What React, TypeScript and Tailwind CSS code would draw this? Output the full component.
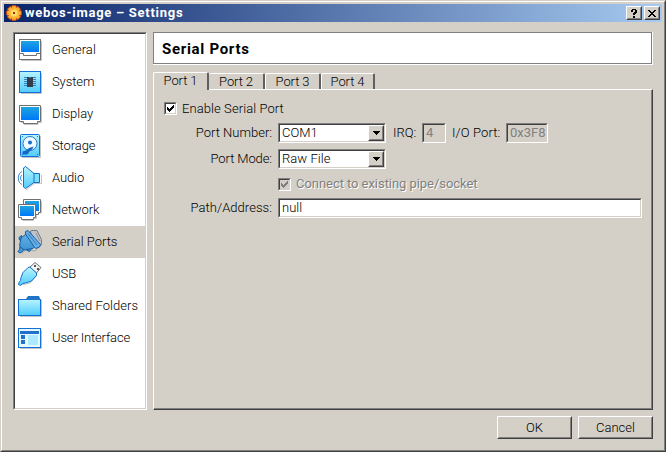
import type { ReactNode } from "react";

const sunken =
  "border border-t-[#808080] border-l-[#808080] border-r-white border-b-white";
const sunkenInner =
  "border border-t-[#404040] border-l-[#404040] border-r-[#d4d0c8] border-b-[#d4d0c8]";
const raised =
  "border border-t-white border-l-white border-r-[#404040] border-b-[#404040]";
const raisedInner =
  "border border-t-[#d4d0c8] border-l-[#d4d0c8] border-r-[#808080] border-b-[#808080]";

function Sunken({ className, inner, children }: { className: string; inner: string; children?: ReactNode }) {
  return (
    <div className={`${sunken} flex shrink-0 ${className}`}>
      <div className={`${sunkenInner} flex min-w-0 flex-1 ${inner}`}>{children}</div>
    </div>
  );
}

function Raised({ className, children }: { className: string; children: ReactNode }) {
  return (
    <button className={`${raised} flex shrink-0 bg-[#d4d0c8] ${className}`}>
      <span className={`${raisedInner} flex h-full flex-1 items-center justify-center`}>{children}</span>
    </button>
  );
}

function Combo({ value, tracking }: { value: string; tracking: string }) {
  return (
    <Sunken className="h-5 w-[108px]" inner="bg-white">
      <span className={`flex-1 pl-[2px] leading-4 ${tracking}`}>{value}</span>
      <Raised className="h-4 w-4">
        <svg width="7" height="4" viewBox="0 0 7 4" shapeRendering="crispEdges">
          <path d="M0 0h7v1H6v1H5v1H4v1H3V3H2V2H1V1H0z" />
        </svg>
      </Raised>
    </Sunken>
  );
}

function Check({ disabled }: { disabled?: boolean }) {
  return (
    <Sunken className="size-[13px]" inner={disabled ? "bg-[#d4d0c8]" : "bg-white"}>
      <svg width="9" height="9" viewBox="0 0 9 9" shapeRendering="crispEdges">
        <path d="M1 3h1v1h1v1h1V4h1V3h1V2h1V1h1v3H7v1H6v1H5v1H4v1H3V7H2V6H1z" fill={disabled ? "#808080" : "#000"} />
      </svg>
    </Sunken>
  );
}

const icons: Record<string, ReactNode> = {
  General: (
    <>
      <path d="M5 26.5h20.5V7" fill="none" stroke="#c4c4c4" />
      <rect x="3.5" y="5.5" width="21" height="20" fill="#fff" stroke="#707070" />
      <rect x="5" y="7" width="18" height="11" fill="url(#screen)" />
      <path d="M3 19.5h4.5v2h13v-2H25" fill="none" stroke="#707070" />
    </>
  ),
  System: (
    <>
      <path d="M5 27.5h20.5V7" fill="none" stroke="#c4c4c4" />
      <rect x="3.5" y="5.5" width="21" height="21" fill="url(#cyan)" stroke="#1470d8" />
      <path d="M8 11.5h12M8 13.5h12M8 15.5h12M8 17.5h12M8 19.5h12" stroke="#2f83c4" />
      <path d="M11 11h2v1h2v-1h2v10h-6z" fill="#383c48" />
    </>
  ),
  Display: (
    <>
      <path d="M5 24.5h3v2h14v-2h3.5V9" fill="none" stroke="#c4c4c4" />
      <path d="M3.5 7.5h21v16h-3v2h-14v-2h-4z" fill="#fff" stroke="#707070" />
      <rect x="5" y="9" width="18" height="13" fill="url(#screen)" />
    </>
  ),
  Storage: (
    <>
      <path d="M6 27.5h18.5V6" fill="none" stroke="#c4c4c4" />
      <rect x="4.5" y="4.5" width="19" height="22" rx="1" fill="url(#cyan)" stroke="#1470d8" />
      <circle cx="14" cy="13.5" r="7" fill="#effcff" stroke="#2a78c8" />
      <circle cx="14" cy="12.5" r="2" fill="#186ec8" />
      <path d="M17.500 16.500L13 18l-3 2.500-3.500 1v3h5l2-3 3-2.500z" fill="#1668c4" />
      <path d="M6 6.500h1M21 6.500h1M6 24.500h1M21 24.500h1" stroke="#1470d8" />
    </>
  ),
  Audio: (
    <>
      <path d="M19 21.5h6.5V13M10 28l9-7" fill="none" stroke="#c4c4c4" />
      <path d="M17 11.5h6.500v9H17" fill="#7ce0ff" stroke="#1470c8" />
      <path d="M7.5 6l2-1.5 8.5 7v9l-8.5 6-2-1.5z" fill="url(#cyan)" stroke="#1470c8" />
      <path d="M6 9.5c-5 2-5 11 0 13M6 13c-2 1-2 5 0 6" fill="none" stroke="#3a88d0" />
    </>
  ),
  Network: (
    <>
      <path d="M25.5 7v12H22M20.5 13v11.500h-3v2h-11" fill="none" stroke="#c4c4c4" />
      <path d="M7.5 5.5h17v13h-2v2h-12v-2h-3z" fill="#fff" stroke="#707070" />
      <rect x="9" y="7" width="14" height="10" fill="url(#screen)" />
      <path d="M2.5 10.5h17v13h-2v2h-12v-2h-3z" fill="#fff" stroke="#707070" />
      <rect x="4" y="12" width="14" height="10" fill="url(#screen)" />
    </>
  ),
  "Serial Ports": (
    <>
      <path d="M6 27.500l4-3.500 9 1 7-6.500" fill="none" stroke="#a8a8a8" />
      <path d="M14 5.500l2-1h5l4.500 9v5l-4 1z" fill="#bfc2c8" stroke="#747a84" />
      <path d="M20 7l4 8" stroke="#8c9098" />
      <path d="M5.500 9.500l-2.500 2 .5 2.500 3 1zM12 21l-1 3.500 2.500 1 2-3z" fill="#4796d4" stroke="#155ca8" />
      <path d="M4 20.500l-.5 3-1.500 2 1.500 1.500L6 26l2-2.500z" fill="#4796d4" stroke="#155ca8" />
      <path d="M10 8l-5 4-1.500 8L8 24l9-1.500 2-2z" fill="url(#serial)" stroke="#155ca8" />
      <path d="M9.500 5.500l2.500-1 12.500 14-1 2.500-4 1.500-1.500-2L9.500 8z" fill="#68b0e4" stroke="#155ca8" />
      <path d="M12 7.500l9 11.500" stroke="#2878bc" />
    </>
  ),
  USB: (
    <>
      <path d="M5 27l9-2 7-8" fill="none" stroke="#bcbcbc" />
      <path d="M13.500 9.500l5.500-5 6 5-4.500 5.500z" fill="#f4f4f4" stroke="#707070" />
      <path d="M18 7h2v2h-2zM21 10h2v2h-2z" fill="#555" />
      <path d="M12 9.500l2-.5 6.500 6v2.500l-5 5.500-6 2-3 .5-2 2-2-1 .5-2 1.500-2 .5-3 2-5z" fill="url(#cyan)" stroke="#1470c8" />
    </>
  ),
  "Shared Folders": (
    <>
      <path d="M4 26.5h21.5V10" fill="none" stroke="#c4c4c4" />
      <path d="M2 9h8l2-3h11l1 3h1v6H2z" fill="#1c72c8" />
      <rect x="2.5" y="9.5" width="22" height="16" fill="url(#cyan)" stroke="#1470d8" />
      <path d="M11 9l1.5-2.5h10L24 9v1H11z" fill="#2474c8" />
    </>
  ),
  "User Interface": (
    <>
      <path d="M4 26.5h21.5V8" fill="none" stroke="#c4c4c4" />
      <rect x="2.5" y="6.5" width="22" height="19" fill="#e4f8ff" stroke="#1470d8" />
      <path d="M4 9h19v3H4zM5 13h4v4H5zM5 18h4v4H5z" fill="#2070cc" />
      <rect x="12" y="13" width="10" height="10" fill="#aeeaff" />
    </>
  ),
};

const items = [
  { name: "General", tracking: "tracking-[0.05px]" },
  { name: "System", tracking: "tracking-[-0.1px]" },
  { name: "Display", tracking: "tracking-normal" },
  { name: "Storage", tracking: "tracking-[-0.1px]" },
  { name: "Audio", tracking: "tracking-[-0.1px]" },
  { name: "Network", tracking: "tracking-[-0.1px]" },
  { name: "Serial Ports", tracking: "tracking-normal" },
  { name: "USB", tracking: "tracking-normal" },
  { name: "Shared Folders", tracking: "tracking-[0.05px]" },
  { name: "User Interface", tracking: "tracking-[-0.15px]" },
];

function Gear() {
  return (
    <svg className="ml-[1px]" width="16" height="16" viewBox="0 0 16 16">
      <path
        d="M6 .7h4l.4 1.8 1.5-1 2.6 2.6-1 1.500 1.8.4v4l-1.8.4 1 1.500-2.600 2.600-1.500-1-.4 1.800H6l-.4-1.800-1.500 1-2.600-2.600 1-1.500L.7 10V6l1.800-.4-1-1.500 2.600-2.600 1.500 1z"
        fill="#ffb030"
        stroke="#d05010"
      />
      <circle cx="8" cy="8" r="4" fill="#ffdc68" stroke="#ffb83c" />
      <rect x="7" y="7" width="2" height="2" fill="#a3320c" />
    </svg>
  );
}

const tabEdge = "rounded-t-[2px] border-t border-l border-t-white border-l-white flex justify-center tracking-[-0.1px]";

export default function App() {
  return (
    <div className="flex h-[452px] w-[666px] border-t border-r border-b border-l border-t-[#d4d0c8] border-l-[#d4d0c8] border-r-[#404040] border-b-[#404040] font-['Roboto','Liberation_Sans',sans-serif] text-[13px] leading-4 font-light text-black">
      <svg className="absolute" width="0" height="0">
        <defs>
          <linearGradient id="screen" x2="0" y2="1"><stop stopColor="#20a4e0" /><stop offset="1" stopColor="#0078f8" /></linearGradient>
          <linearGradient id="cyan" x2="0" y2="1"><stop stopColor="#b8f4ff" /><stop offset="1" stopColor="#50ccfc" /></linearGradient>
          <linearGradient id="serial" x2="0" y2="1"><stop stopColor="#62b0e0" /><stop offset="1" stopColor="#3e94d4" /></linearGradient>
        </defs>
      </svg>
      <div className="flex flex-1 flex-col border border-t-white border-l-white border-r-[#808080] border-b-[#808080] bg-[#d4d0c8] p-[2px]">
        <header className="flex h-[18px] items-center gap-[2px] bg-linear-to-r/srgb from-[#0a246a] to-[#a6caf0] pl-[1px] pr-[2px]">
          <Gear />
          <h1 className="ml-[1px] flex-1 font-bold tracking-[0.72px] text-white">webos-image – Settings</h1>
          <Raised className="h-[14px] w-4">
            <svg width="8" height="9" viewBox="0 0 8 9" shapeRendering="crispEdges">
              <path d="M2 0h4v1h1v3H6v1H5v1H3V4h1V3h1V1H3v2H1V1h1zM3 7h2v2H3z" />
            </svg>
          </Raised>
          <Raised className="h-[14px] w-4">
            <svg width="8" height="7" viewBox="0 0 8 7" shapeRendering="crispEdges">
              <path d="M0 0h2v1h1v1h2V1h1V0h2v1H7v1H6v1H5v1h1v1h1v1h1v1H6V6H5V5H3v1H2v1H0V6h1V5h1V4h1V3H2V2H1V1H0z" />
            </svg>
          </Raised>
        </header>
        <main className="mt-[10px] ml-[9px] flex gap-[6px]">
          <Sunken className="h-[378px] w-[134px]" inner="bg-white">
            <nav className="flex-1">
              {items.map((item) => (
                <div key={item.name} className={`flex h-8 gap-2 pl-[1px] ${item.name === "Serial Ports" ? "bg-[#d4d0c8]" : ""}`}>
                  <svg width="28" height="32" viewBox="0 0 28 32">{icons[item.name]}</svg>
                  <span className={`pt-2 whitespace-nowrap ${item.tracking}`}>{item.name}</span>
                </div>
              ))}
            </nav>
          </Sunken>
          <div className="flex w-[500px] flex-col">
            <div className="h-[33px] border-r border-b border-white">
              <div className="h-8 border border-[#808080] bg-white pt-[6px] pl-2">
                <h2 className="text-[15px] leading-5 font-bold tracking-[0.7px]">Serial Ports</h2>
              </div>
            </div>
            <div className="z-10 mt-[7px] -mb-px flex items-start">
              <div className={`h-[18px] w-14 bg-[#d4d0c8] ${tabEdge} border-r-2 border-r-[#606060]`}>Port 1</div>
              <div className={`mt-px h-4 w-14 ${tabEdge} border-l-0 border-r-2 border-r-[#606060]`}>Port 2</div>
              <div className={`mt-px h-4 w-14 ${tabEdge} border-r-2 border-r-[#606060]`}>Port 3</div>
              <div className={`mt-px h-4 w-[54px] ${tabEdge} border-r-2 border-r-[#606060]`}>Port 4</div>
            </div>
            <section className={`h-[321px] ${raised} flex`}>
              <div className="flex-1 border-r border-b border-[#808080] pt-[10px] pl-[10px]">
                <div className="flex h-4 items-center gap-[5px]">
                  <Check />
                  <span className="pt-px tracking-[0.08px]">Enable Serial Port</span>
                </div>
                <div className="mt-[7px] flex h-5 items-center">
                  <span className="w-[108px] text-right">Port Number:</span>
                  <span className="w-[6px]" />
                  <Combo value="COM1" tracking="tracking-normal" />
                  <span className="ml-[7px] w-[29px]">IRQ:</span>
                  <Sunken className="h-5 w-6" inner="bg-[#d4d0c8] pl-[2px] font-normal text-[#808080]">4</Sunken>
                  <span className="ml-[6px] w-[54px] whitespace-nowrap tracking-[0.1px]">I/O Port:</span>
                  <Sunken className="h-5 w-[42px]" inner="bg-[#d4d0c8] pl-[2px] font-normal text-[#808080]">0x3F8</Sunken>
                </div>
                <div className="mt-[6px] flex h-5 items-center">
                  <span className="w-[108px] text-right tracking-[-0.1px]">Port Mode:</span>
                  <span className="w-[6px]" />
                  <Combo value="Raw File" tracking="tracking-[0.05px]" />
                </div>
                <div className="mt-[7px] ml-[114px] flex h-4 items-center gap-[5px]">
                  <Check disabled />
                  <span className="font-normal tracking-[-0.05px] text-[#808080] [text-shadow:1px_1px_0_white]">Connect to existing pipe/socket</span>
                </div>
                <div className="mt-[6px] flex h-5 items-center">
                  <span className="w-[108px] text-right tracking-[0.05px]">Path/Address:</span>
                  <span className="w-[6px]" />
                  <Sunken className="h-5 w-[364px]" inner="bg-white pl-[2px]">null</Sunken>
                </div>
              </div>
            </section>
          </div>
        </main>
        <footer className="mt-[6px] mr-[9px] flex justify-end gap-[6px]">
          <Raised className="h-[23px] w-[75px]">OK</Raised>
          <Raised className="h-[23px] w-[75px]">Cancel</Raised>
        </footer>
      </div>
    </div>
  );
}
